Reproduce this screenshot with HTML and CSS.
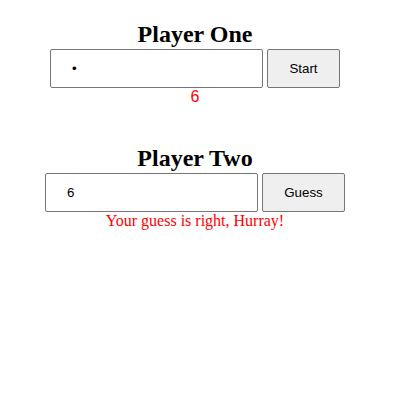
FILE: index.html
```html
<!DOCTYPE html>
<html>
<head>
<meta charset="utf-8">
<link rel="stylesheet" href="styles.css">
</head>
<body>
<div class="app">
  <section class="player">
    <h2 class="title">Player One</h2>
    <div class="row">
      <input class="field" type="password" value="6">
      <button class="btn btn-start">Start</button>
    </div>
    <div class="secret">6</div>
  </section>
  <section class="player player-two">
    <h2 class="title">Player Two</h2>
    <div class="row">
      <input class="field" type="text" value="6">
      <button class="btn btn-guess">Guess</button>
    </div>
    <div class="result">Your guess is right, Hurray!</div>
  </section>
</div>
</body>
</html>
```
FILE: styles.css
```css
html, body {
  margin: 0;
  padding: 0;
  background: #fff;
}
body {
  font-family: "Liberation Serif", "Times New Roman", serif;
  padding: 20px 0 0 8px;
}
.app {
  width: 374px;
  text-align: center;
}
.title {
  margin: 0;
  font-size: 24px;
  font-weight: bold;
  line-height: 28px;
  color: #000;
}
.row {
  display: flex;
  justify-content: center;
  gap: 4px;
  margin-top: 1px;
}
.field {
  box-sizing: border-box;
  width: 213px;
  height: 39px;
  padding: 0 21px;
  border: 1px solid #767676;
  border-radius: 2px;
  font-family: "Liberation Sans", Arial, sans-serif;
  font-size: 13.333px;
  color: #000;
  background: #fff;
}
.btn {
  box-sizing: border-box;
  height: 39px;
  padding: 0;
  border: 1px solid #767676;
  border-radius: 2px;
  background: #efefef;
  font-family: "Liberation Sans", Arial, sans-serif;
  font-size: 13.333px;
  color: #000;
}
.btn-start { width: 73px; }
.btn-guess { width: 83px; }
.secret {
  font-family: "Liberation Sans", Arial, sans-serif;
  font-size: 16px;
  line-height: 18px;
  color: red;
}
.player-two {
  margin-top: 38px;
}
.result {
  font-size: 16px;
  line-height: 18px;
  color: red;
}
```
